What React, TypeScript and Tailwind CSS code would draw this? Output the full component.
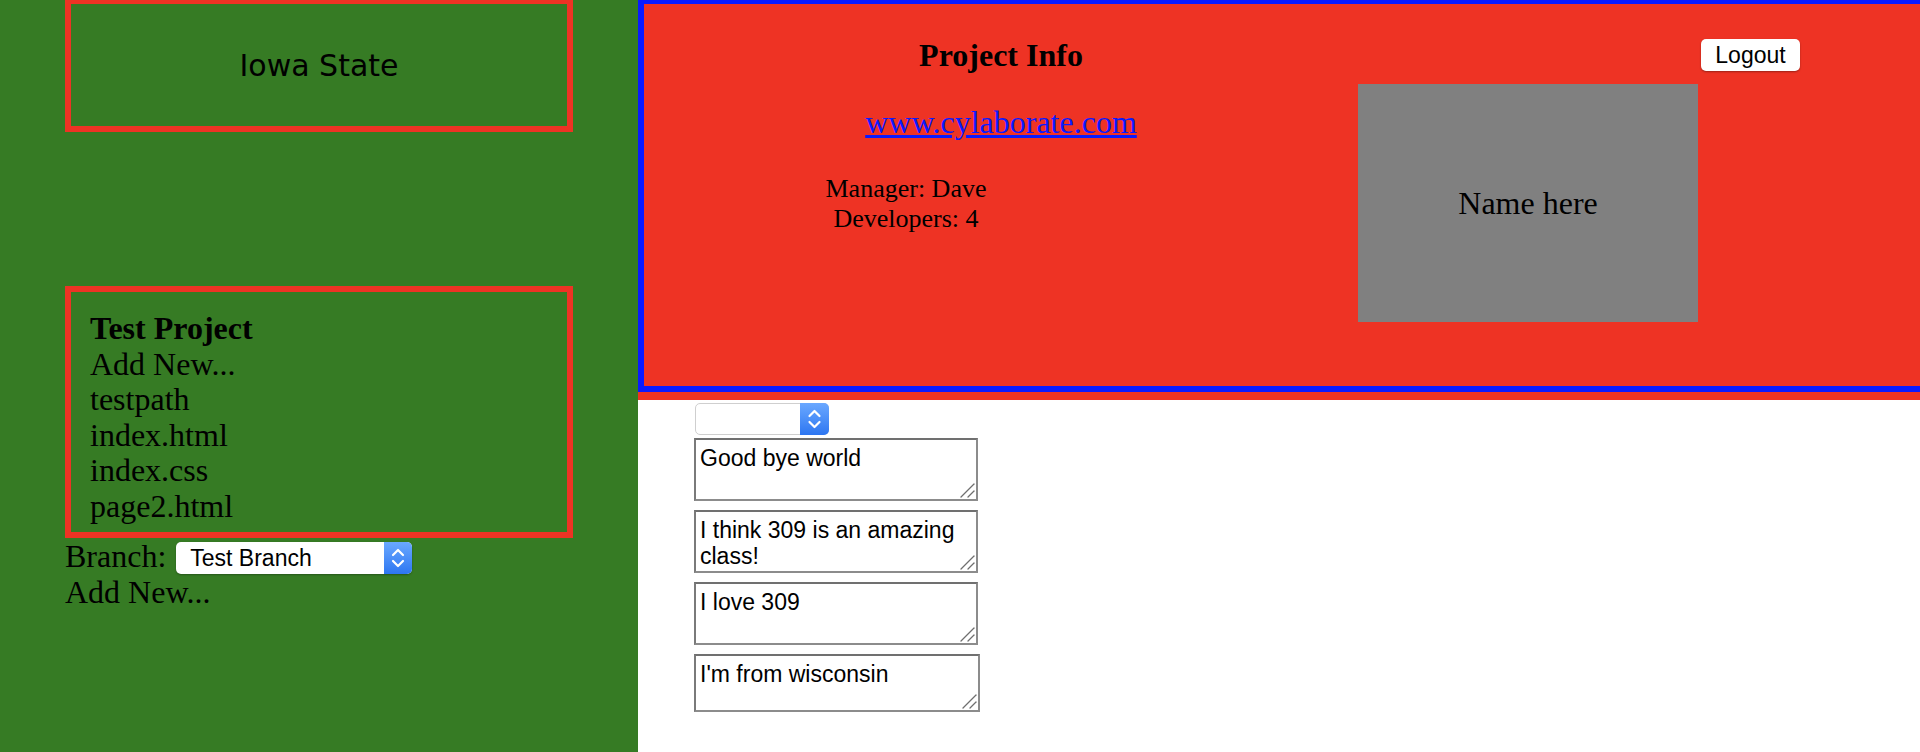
import React from "react";

const files = ["Add New...", "testpath", "index.html", "index.css", "page2.html"];

const notes = [
  { text: "Good bye world", size: "w-[284px] h-[63px]" },
  { text: "I think 309 is an amazing class!", size: "w-[284px] h-[63px]" },
  { text: "I love 309", size: "w-[284px] h-[63px]" },
  { text: "I'm from wisconsin", size: "w-[286px] h-[58px]" },
];

function Arrows() {
  return (
    <svg
      viewBox="0 0 28 32"
      className="h-full w-full"
      fill="none"
      stroke="white"
      strokeWidth="2.2"
      strokeLinecap="round"
      strokeLinejoin="round"
    >
      <polyline points="9,13 14,8 19,13" />
      <polyline points="9,19 14,24 19,19" />
    </svg>
  );
}

function Grip() {
  return (
    <svg
      viewBox="0 0 16 16"
      className="pointer-events-none absolute right-[3px] bottom-[3px] h-[16px] w-[16px]"
      fill="none"
      stroke="#6f6f6f"
      strokeWidth="1.3"
      strokeLinecap="round"
    >
      <line x1="2" y1="15" x2="15" y2="2" />
      <line x1="9" y1="15" x2="15" y2="9" />
    </svg>
  );
}

export default function App() {
  return (
    <div className="flex min-h-[752px] w-full bg-white font-['Liberation_Serif',serif] text-black">
      {/* sidebar */}
      <aside className="w-[638px] shrink-0 bg-[#367b24]">
        <div className="ml-[65px] flex h-[132px] w-[508px] items-center justify-center border-[6px] border-t-4 border-[#ee3324]">
          <h1 className="font-['Comic_Sans_MS','DejaVu_Sans',sans-serif] text-[30px] font-normal">
            Iowa State
          </h1>
        </div>

        <div className="mt-[154px] ml-[65px] h-[252px] w-[508px] border-[6px] border-[#ee3324] pt-[19px] pl-[19px] text-[32px] leading-[35.6px]">
          <div className="font-bold">Test Project</div>
          {files.map((f) => (
            <div key={f}>{f}</div>
          ))}
        </div>

        <div className="ml-[65px] flex h-[36px] items-start text-[32px] leading-[36px]">
          <span>Branch:</span>
          <div className="mt-[4px] ml-[10px] flex h-[32px] w-[236px] rounded-[5px] bg-white shadow-[0_1px_2px_rgba(0,0,0,0.3)]">
            <span className="flex-1 pl-[14px] font-['Liberation_Sans',sans-serif] text-[23px] leading-[32px]">
              Test Branch
            </span>
            <span className="w-[28px] rounded-r-[5px] bg-gradient-to-b from-[#6aa8ff] to-[#2d76f1]">
              <Arrows />
            </span>
          </div>
        </div>
        <div className="ml-[65px] text-[32px] leading-[36px]">Add New...</div>
      </aside>

      {/* main */}
      <main className="min-w-0 flex-1">
        <div className="h-[400px] bg-[#ee3324]">
          <div className="flex h-[392px] border-[6px] border-t-4 border-r-0 border-[#0a1aff]">
            <div className="w-[714px] shrink-0 text-center">
              <div className="mt-[33px] text-[32px] leading-[36px] font-bold">Project Info</div>
              <a
                href="#"
                className="mt-[31px] block text-[32px] leading-[36px] text-[#0a1aff] underline"
              >
                www.cylaborate.com
              </a>
              <div className="mt-[34px] w-[524px] text-[26px] leading-[30px]">
                Manager: Dave
                <br />
                Developers: 4
              </div>
            </div>
            <div className="mt-[80px] flex h-[238px] w-[340px] shrink-0 items-center justify-center bg-[#808080] text-[32px]">
              Name here
            </div>
            <button className="mt-[35px] ml-[3px] h-[32px] w-[99px] shrink-0 rounded-[5px] bg-white font-['Liberation_Sans',sans-serif] text-[23px] leading-[32px] shadow-[0_1px_2px_rgba(0,0,0,0.35)]">
              Logout
            </button>
          </div>
        </div>

        <div className="mt-[3px] ml-[57px] flex h-[32px] w-[134px] rounded-[5px] border border-[#cfcfcf] bg-white">
          <span className="flex-1" />
          <span className="-my-px -mr-px w-[29px] rounded-r-[5px] bg-gradient-to-b from-[#6aa8ff] to-[#2d76f1]">
            <Arrows />
          </span>
        </div>

        <div className="ml-[56px] flex flex-col items-start gap-[9px] pt-[3px]">
          {notes.map((n) => (
            <div key={n.text} className="relative">
              <textarea
                readOnly
                defaultValue={n.text}
                className={`block ${n.size} resize-none overflow-hidden border-2 border-[#8c8c8c] border-t-[#707070] border-l-[#7a7a7a] bg-white px-[4px] pt-[5px] font-['Liberation_Sans',sans-serif] text-[23px] leading-[26px] text-black outline-none`}
              />
              <Grip />
            </div>
          ))}
        </div>
      </main>
    </div>
  );
}
